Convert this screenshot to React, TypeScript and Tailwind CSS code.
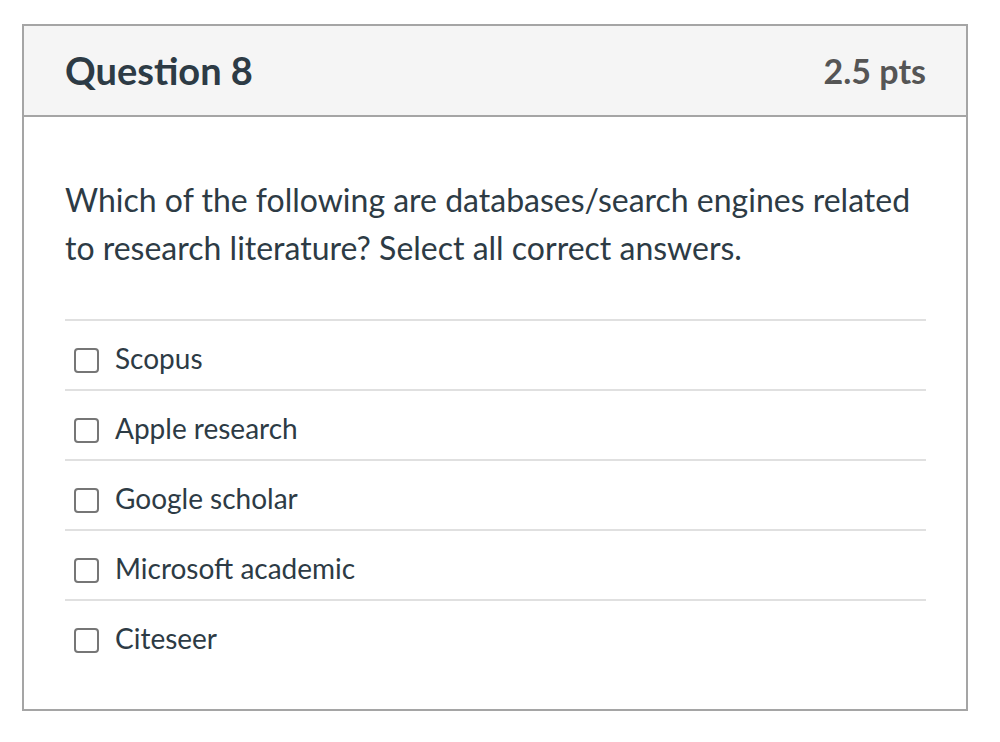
import React from 'react'

const answers = ['Scopus', 'Apple research', 'Google scholar', 'Microsoft academic', 'Citeseer']

function Answer({ label }: { label: string }) {
  return (
    <div className="border-t-2 border-[#e0e0e0] pt-[27px] pb-[16px] flex items-center">
      <span className="ml-[9px] w-[25px] h-[25px] rounded-[4px] border-2 border-[#767676] bg-white shrink-0" />
      <span className="ml-[16px] text-[28px] leading-[25px] text-[#2d3b45] -translate-y-[2px]">{label}</span>
    </div>
  )
}

export default function App() {
  return (
    <div className="min-h-[742px] bg-white pt-[24px] pl-[22px] font-['Lato','Liberation_Sans',sans-serif]">
      <div className="w-[946px] h-[687px] border-2 border-[#a5a5a5] flex flex-col">
        <div className="h-[91px] shrink-0 bg-[#f5f5f5] border-b-2 border-[#a5a5a5] pl-[41px] pr-[40px] flex items-center justify-between">
          <h2 className="text-[38px] font-bold text-[#2d3b45]">Question 8</h2>
          <span className="text-[34px] font-bold text-[#555555]">2.5 pts</span>
        </div>
        <div className="pl-[41px] pr-[40px] pt-[59px]">
          <p className="text-[32px] leading-[48px] text-[#2d3b45]">
            Which of the following are databases/search engines related to research literature? Select all correct answers.
          </p>
          <div className="mt-[47px]">
            {answers.map((a) => (
              <Answer key={a} label={a} />
            ))}
          </div>
        </div>
      </div>
    </div>
  )
}
